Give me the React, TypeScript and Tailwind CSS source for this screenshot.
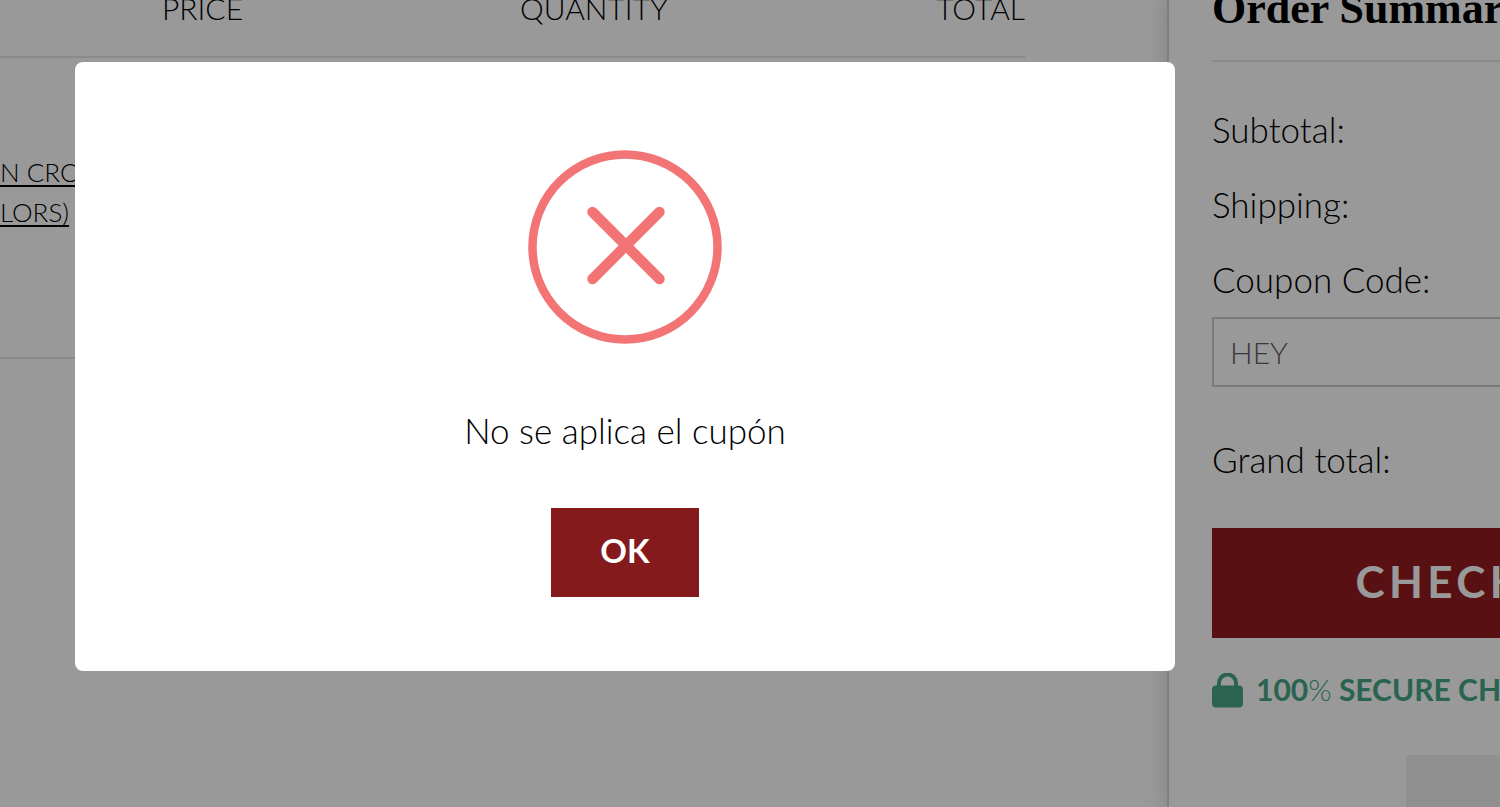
function ErrorIcon() {
  return (
    <svg className="size-[194px]" viewBox="0 0 194 194" fill="none" stroke="#f27474" aria-hidden="true">
      <circle cx="97" cy="97" r="92.5" strokeWidth="8.5" />
      <path d="M64.5 62 L131.5 129 M131.5 62 L64.5 129" strokeWidth="10.5" strokeLinecap="round" />
    </svg>
  );
}

function LockIcon() {
  return (
    <svg className="h-9 w-8 shrink-0" viewBox="0 0 32 36" aria-hidden="true">
      <path d="M7 15 V10 a8.5 8.5 0 0 1 17 0 V15" fill="none" stroke="#46a785" strokeWidth="4" />
      <rect x="0" y="12.5" width="31" height="22" rx="4" fill="#46a785" />
    </svg>
  );
}

function CartTable() {
  return (
    <table className="w-full table-fixed border-collapse text-left">
      <thead>
        <tr className="h-[69px] border-b-2 border-[#e6e6e6] align-top text-[30px] leading-10">
          <th className="w-[162px] font-light"></th>
          <th className="w-[300px] font-light">PRICE</th>
          <th className="w-[264px] text-center font-light">QUANTITY</th>
          <th className="text-right font-light">TOTAL</th>
        </tr>
      </thead>
      <tbody>
        <tr className="h-[301px] border-b-2 border-[#e6e6e6] align-top">
          <td className="pt-[94px]">
            <a href="#product" className="text-[26px] leading-10 underline decoration-2 underline-offset-3">
              N CRO
              <br />
              LORS)
            </a>
          </td>
          <td></td>
          <td></td>
          <td></td>
        </tr>
      </tbody>
    </table>
  );
}

function OrderSummary() {
  return (
    <div className="w-[562px]">
      <h2 className="-mt-4 border-b-2 border-[#e6e6e6] pb-[26px] font-['Liberation_Serif',serif] text-[44px] leading-[50px] font-bold">
        Order Summary
      </h2>
      <div className="flex flex-col gap-[35px] pt-[47px] text-[35px] leading-10">
        <div>Subtotal:</div>
        <div>Shipping:</div>
        <label htmlFor="coupon">Coupon Code:</label>
      </div>
      <input
        id="coupon"
        type="text"
        defaultValue="HEY"
        className="mt-[18px] block h-[70px] w-full border-2 border-[#cccccc] px-4 text-[30px] text-[#606060]"
      />
      <div className="pt-[52px] text-[35px] leading-10">Grand total:</div>
      <button type="button" className="mt-[49px] h-[110px] w-full bg-[#951b20] pb-1 text-[44px] font-bold tracking-widest text-white">
        CHECKOUT
      </button>
      <div className="flex items-center gap-3 pt-[31px] text-[30px] leading-10 font-bold text-[#46a785]">
        <LockIcon />
        <span className="pb-1">
          100<span className="font-light">%</span> SECURE CHECKOUT
        </span>
      </div>
      <div className="mt-[42px] ml-[194px] h-[120px] bg-[#f0f0f0]"></div>
    </div>
  );
}

function CouponDialog() {
  return (
    <div className="absolute inset-0 flex items-start bg-black/40 pt-[62px] pr-[325px] pl-[75px]">
      <div
        role="alertdialog"
        aria-labelledby="coupon-message"
        className="flex w-full flex-col items-center rounded-lg bg-white pt-[88px] pb-[74px]"
      >
        <ErrorIcon />
        <p id="coupon-message" className="pt-[66px] text-[35px] leading-10">
          No se aplica el cupón
        </p>
        <button type="button" className="mt-[58px] h-[89px] w-[148px] bg-[#851a1d] pb-1 text-[33px] font-bold text-white">
          OK
        </button>
      </div>
    </div>
  );
}

export default function App() {
  return (
    <div className="relative h-screen overflow-hidden bg-white font-[Lato,sans-serif] font-light text-black">
      <div className="flex h-full">
        <main className="min-w-0 flex-1 pr-[142px]">
          <div className="-mt-3">
            <CartTable />
          </div>
        </main>
        <aside className="w-[333px] shrink-0 border-l-2 border-[#d4d4d4] pl-[43px] shadow-[0_0_20px_rgba(0,0,0,0.16)]">
          <OrderSummary />
        </aside>
      </div>
      <CouponDialog />
    </div>
  );
}
